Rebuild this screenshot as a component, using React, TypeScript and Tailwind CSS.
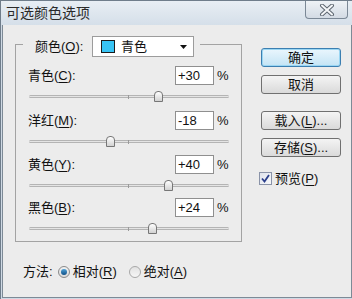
import type React from "react"

const rows = [
  { label: "青色", key: "C", value: 30, gap: "mt-[9px]" },
  { label: "洋红", key: "M", value: -18, gap: "mt-[9px]" },
  { label: "黄色", key: "Y", value: 40, gap: "mt-[8px]" },
  { label: "黑色", key: "B", value: 24, gap: "mt-[7px]" },
]

const Mnemonic = ({ text, k, tail = ":" }: { text: string; k: string; tail?: string }) => (
  <span>
    {text}(<span className="underline underline-offset-2">{k}</span>){tail}
  </span>
)

const Button = ({ children, primary, className = "" }: { children: React.ReactNode; primary?: boolean; className?: string }) => (
  <div
    className={`flex h-[19px] w-[80px] items-center justify-center rounded-[3px] border text-[13px] leading-none ${
      primary
        ? "border-[#3c7fb1] bg-gradient-to-b from-[#eaf6fd] to-[#c4e4f5] shadow-[inset_0_0_0_1px_#9ad6f3]"
        : "border-[#707070] bg-gradient-to-b from-[#f4f4f4] to-[#dadada]"
    } ${className}`}
  >
    {children}
  </div>
)

const Slider = ({ value }: { value: number }) => {
  const center = 99.5 + value * 0.995
  return (
    <div className="relative ml-[13px] mt-[6px] h-[11px] w-[200px]">
      <div className="absolute left-0 right-0 top-[4px] h-[3px] rounded-full border-y border-[#b4b4b4] bg-[#e4e4e4]" />
      <div className="absolute left-[99px] top-[4px] h-[4px] w-px bg-[#9a9a9a]" />
      <div
        className="absolute top-0 h-[11px] w-[9px] rounded-t-[4px] border border-[#767676] bg-gradient-to-b from-white to-[#d2d2d2]"
        style={{ left: center - 4.5 }}
      />
    </div>
  )
}

const App = () => {
  return (
    <div className="flex h-[299px] w-[352px] flex-col overflow-hidden border-l border-t border-[#6f7d8b] bg-[#ececec] font-[Liberation_Sans,Noto_Sans_CJK_SC,sans-serif] text-[13px] text-[#111]">
      {/* Title bar */}
      <div className="flex h-[24px] shrink-0 items-start justify-between bg-gradient-to-b from-[#e8eef4] to-[#d5dfe9]">
        <div className="pl-[5px] pt-[3px] text-[14px] leading-[18px] text-[#2a2a2a]">可选颜色选项</div>
        <div className="mr-[4px] flex h-[18px] w-[43px] items-center justify-center rounded-b-[4px] border border-t-0 border-[#7b8896] bg-gradient-to-b from-[#eef2f6] to-[#d3dbe4]">
          <svg width="16" height="12" viewBox="0 0 16 12">
            <path d="M3 1.5L13 10.5M13 1.5L3 10.5" stroke="#5d6670" strokeWidth="4" strokeLinecap="round" />
            <path d="M3 1.5L13 10.5M13 1.5L3 10.5" stroke="#f4f6f8" strokeWidth="2" strokeLinecap="round" />
          </svg>
        </div>
      </div>

      {/* Frame */}
      <div className="flex flex-1 border-b border-l border-[#cfd9e4]">
        <div className="flex flex-1 border-b border-l border-r border-[#7d8a96]">
          {/* Left column */}
          <div className="flex flex-col pl-[12px]">
            <div className="mt-[19px] h-[198px] w-[227px] border border-[#a3a3a3]">
              {/* Group header */}
              <div className="-mt-[9px] ml-[7px] flex h-[21px] w-[177px] items-center bg-[#ececec] pl-[12px] pr-[6px]">
                <div className="w-[57px]">
                  <Mnemonic text="颜色" k="O" />
                </div>
                <div className="flex h-[21px] w-[102px] items-center border border-[#9c9c9c] bg-white">
                  <div className="ml-[8px] h-[13px] w-[14px] border border-[#1b1b1b] bg-[#38c4f4]" />
                  <span className="ml-[6px]">青色</span>
                  <svg className="ml-auto mr-[6px]" width="7" height="4" viewBox="0 0 7 4">
                    <path d="M0 0H7L3.5 4Z" fill="#111" />
                  </svg>
                </div>
              </div>

              {rows.map((r) => (
                <div key={r.key} className={r.gap}>
                  <div className="flex h-[19px] items-center pl-[12px]">
                    <div className="w-[147px]">
                      <Mnemonic text={r.label} k={r.key} />
                    </div>
                    <div className="flex h-[19px] w-[39px] items-center border border-[#8f8f8f] bg-white pl-[2px] text-[13px]">
                      {r.value > 0 ? `+${r.value}` : r.value}
                    </div>
                    <span className="ml-[3px]">%</span>
                  </div>
                  <Slider value={r.value} />
                </div>
              ))}
            </div>

            {/* Method */}
            <div className="ml-[8px] mt-[22px] flex h-[16px] items-center">
              <span>方法:</span>
              <div className="ml-[5px] flex h-[12px] w-[12px] items-center justify-center rounded-full border border-[#8a8a8a] bg-gradient-to-b from-[#f2f2f2] to-[#d9d9d9]">
                <div className="h-[6px] w-[6px] rounded-full bg-gradient-to-b from-[#4fa3d8] to-[#0d4f86]" />
              </div>
              <span className="ml-[3px]">
                <Mnemonic text="相对" k="R" tail="" />
              </span>
              <div className="ml-[12px] h-[12px] w-[12px] rounded-full border border-[#a8a8a8] bg-gradient-to-b from-[#e2e2e2] to-[#f6f6f6]" />
              <span className="ml-[3px]">
                <Mnemonic text="绝对" k="A" tail="" />
              </span>
            </div>
          </div>

          {/* Right column */}
          <div className="ml-[19px] flex flex-col">
            <Button primary className="mt-[23px]">确定</Button>
            <Button className="mt-[8px]">取消</Button>
            <Button className="mt-[17px]">
              <Mnemonic text="载入" k="L" tail="..." />
            </Button>
            <Button className="mt-[8px]">
              <Mnemonic text="存储" k="S" tail="..." />
            </Button>
            <div className="-ml-[2px] mt-[15px] flex h-[13px] items-center">
              <div className="flex h-[13px] w-[13px] items-center justify-center border border-[#8a93a8] bg-gradient-to-br from-[#dfe3ec] to-[#f7f8fa]">
                <svg width="9" height="9" viewBox="0 0 9 9">
                  <path d="M1 4.5L3.5 7.5L8 1" stroke="#2b3f8c" strokeWidth="1.8" fill="none" />
                </svg>
              </div>
              <span className="ml-[3px]">
                <Mnemonic text="预览" k="P" tail="" />
              </span>
            </div>
          </div>
        </div>
      </div>
    </div>
  )
}

export default App
